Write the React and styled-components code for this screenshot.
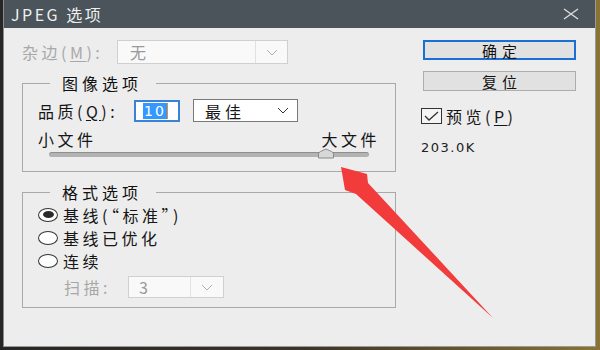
import React from 'react';
import styled, { createGlobalStyle } from 'styled-components';

const GlobalStyle = createGlobalStyle`
  html, body {
    margin: 0;
    padding: 0;
  }
  body {
    width: 600px;
    height: 350px;
    overflow: hidden;
    background: #2e2a24;
    font-family: 'Noto Sans CJK SC', 'Noto Sans', sans-serif;
  }
`;

const Screen = styled.div`
  position: relative;
  width: 600px;
  height: 350px;
  box-sizing: border-box;
  padding: 0 4px 3px 3px;
  background: linear-gradient(to right, #262626 0%, #3a3328 50%, #8a7434 100%);
`;

const Dialog = styled.div`
  width: 593px;
  height: 347px;
  box-sizing: border-box;
  display: flex;
  flex-direction: column;
  background: #ededed;
  border-left: 1px solid #8c8c8c;
  border-right: 1px solid #9a9a9a;
  border-bottom: 1px solid #9a9a9a;
`;

const TitleBar = styled.div`
  height: 28px;
  flex: none;
  display: flex;
  align-items: center;
  justify-content: space-between;
  padding: 0 16px 0 7px;
  background: #4a545a;
`;

const Title = styled.span`
  color: #eef0f0;
  font-size: 16px;
  letter-spacing: 2.5px;
  line-height: 28px;
`;

const Body = styled.div`
  display: flex;
  gap: 25px;
  padding: 12px 0 0 18px;
`;

const LeftCol = styled.div`
  width: 374px;
  display: flex;
  flex-direction: column;
`;

const RightCol = styled.div`
  width: 155px;
  display: flex;
  flex-direction: column;
`;

const Row = styled.div`
  display: flex;
  align-items: center;
  height: ${(p) => p.$h || 23}px;
  margin-top: ${(p) => p.$mt || 0}px;
  padding-left: ${(p) => p.$pl || 0}px;
`;

const Label = styled.span`
  width: ${(p) => (p.$w ? `${p.$w}px` : 'auto')};
  flex: none;
  font-size: 16px;
  letter-spacing: 3.5px;
  line-height: 18px;
  color: ${(p) => (p.$disabled ? '#a8a8a8' : '#161616')};
  white-space: nowrap;
`;

const Key = styled.span`
  text-decoration: underline;
  text-underline-offset: 2px;
`;

const SelectBox = styled.div`
  width: ${(p) => p.$w}px;
  height: ${(p) => p.$h}px;
  box-sizing: border-box;
  display: flex;
  align-items: stretch;
  flex: none;
  border: 1px solid ${(p) => (p.$disabled ? '#d0d0d0' : '#7a7a7a')};
  background: ${(p) => (p.$disabled ? '#f9f9f9' : '#ffffff')};
`;

const SelectValue = styled.span`
  flex: 1;
  display: flex;
  align-items: center;
  padding-left: ${(p) => p.$pl || 11}px;
  font-size: 16px;
  letter-spacing: 4px;
  color: ${(p) => (p.$disabled ? '#9a9a9a' : '#161616')};
`;

const SelectArrow = styled.span`
  width: ${(p) => p.$w}px;
  flex: none;
  display: flex;
  align-items: center;
  justify-content: center;
  border-left: ${(p) => (p.$split ? '1px solid #e2e2e2' : 'none')};
`;

const Group = styled.fieldset`
  margin: ${(p) => p.$mt}px 0 0 0;
  padding: ${(p) => p.$pt}px 15px ${(p) => p.$pb}px 15px;
  border: 1px solid #a9a9a9;
  min-width: 0;
`;

const Legend = styled.legend`
  margin-left: 12px;
  padding: 0 14px 0 12px;
  font-size: 16px;
  letter-spacing: 4px;
  line-height: 18px;
  color: #111;
`;

const NumberInput = styled.div`
  width: 46px;
  height: 22px;
  box-sizing: border-box;
  flex: none;
  display: flex;
  align-items: center;
  padding-left: 7px;
  margin-right: 13px;
  border: 2px solid #3a82d6;
  background: #fff;
`;

const Selected = styled.span`
  background: #3399ff;
  color: #fff;
  font-family: 'DejaVu Sans', sans-serif;
  font-size: 14px;
  letter-spacing: 2px;
  line-height: 16px;
  padding: 0 1px;
  border-right: 1px solid #e0902c;
`;

const SizeLabels = styled.div`
  display: flex;
  justify-content: space-between;
  margin-top: 9px;
  height: 16px;
  align-items: center;
`;

const Slider = styled.div`
  position: relative;
  height: 10px;
  margin: 2px 11px 0;
  display: flex;
  align-items: center;
`;

const Track = styled.div`
  flex: 1;
  height: 5px;
  border-radius: 3px;
  background: #b3b3b3;
  border-top: 1px solid #8f8f8f;
  box-sizing: border-box;
`;

const Thumb = styled.svg`
  position: absolute;
  top: -1px;
  margin-left: -10px;
`;

const RadioList = styled.div`
  display: flex;
  flex-direction: column;
`;

const RadioRow = styled.label`
  display: flex;
  align-items: center;
  gap: 5px;
  height: 23px;
`;

const RadioDot = styled.span`
  width: 20px;
  height: 14px;
  box-sizing: border-box;
  flex: none;
  border: 1px solid #333;
  border-radius: 50%;
  background: #fff;
  display: flex;
  align-items: center;
  justify-content: center;

  &::after {
    content: '';
    width: 11px;
    height: 7px;
    border-radius: 50%;
    background: ${(p) => (p.$checked ? '#2a2a2a' : 'transparent')};
  }
`;

const Button = styled.div`
  width: 153px;
  height: 20px;
  box-sizing: border-box;
  margin: ${(p) => p.$mt || 0}px 0 0 2px;
  display: flex;
  align-items: center;
  justify-content: center;
  padding-left: 5px;
  background: #e1e1e1;
  border: ${(p) => (p.$primary ? '2px solid #1a6fd4' : '1px solid #adadad')};
  font-size: 15px;
  letter-spacing: 5px;
  color: #111;
`;

const CheckRow = styled.div`
  display: flex;
  align-items: center;
  gap: 4px;
  height: 16px;
  margin-top: 17px;
`;

const CheckBox = styled.span`
  width: 21px;
  height: 16px;
  box-sizing: border-box;
  flex: none;
  border: 1px solid #333;
  background: #f4f4f4;
  display: flex;
  align-items: center;
  justify-content: center;
`;

const SizeText = styled.div`
  margin-top: 16px;
  height: 16px;
  line-height: 16px;
  font-family: 'DejaVu Sans', sans-serif;
  font-size: 13px;
  letter-spacing: 1.5px;
  color: #222;
`;

const Annotation = styled.svg`
  position: absolute;
  left: 0;
  top: 0;
  pointer-events: none;
`;

const Chevron = ({ color }) => (
  <svg width="12" height="7" viewBox="0 0 12 7">
    <polyline points="1,1 6,6 11,1" fill="none" stroke={color} strokeWidth="1" />
  </svg>
);

const Select = ({ value, w, h, arrowW, split, disabled, pl }) => (
  <SelectBox $w={w} $h={h} $disabled={disabled}>
    <SelectValue $disabled={disabled} $pl={pl}>{value}</SelectValue>
    <SelectArrow $w={arrowW} $split={split}>
      <Chevron color={disabled ? '#b0b0b0' : '#333'} />
    </SelectArrow>
  </SelectBox>
);

const Radio = ({ checked, children }) => (
  <RadioRow>
    <RadioDot $checked={checked} />
    <Label>{children}</Label>
  </RadioRow>
);

const quality = 0.87;

export default function App() {
  return (
    <>
      <GlobalStyle />
      <Screen>
        <Dialog>
          <TitleBar>
            <Title>JPEG 选项</Title>
            <svg width="16" height="12" viewBox="0 0 16 12">
              <path d="M1 1 L15 11 M15 1 L1 11" stroke="#dcdcdc" strokeWidth="1.4" />
            </svg>
          </TitleBar>
          <Body>
            <LeftCol>
              <Row $h={24}>
                <Label $w={95} $disabled>
                  杂边(<Key>M</Key>):
                </Label>
                <Select value="无" w={171} h={24} arrowW={31} split disabled pl={12} />
              </Row>

              <Group $mt={10} $pt={7} $pb={12}>
                <Legend>图像选项</Legend>
                <Row $h={23}>
                  <Label $w={96}>
                    品质(<Key>Q</Key>):
                  </Label>
                  <NumberInput>
                    <Selected>10</Selected>
                  </NumberInput>
                  <Select value="最佳" w={105} h={23} arrowW={28} pl={11} />
                </Row>
                <SizeLabels>
                  <Label>小文件</Label>
                  <Label>大文件</Label>
                </SizeLabels>
                <Slider>
                  <Track />
                  <Thumb
                    width="18"
                    height="11"
                    viewBox="0 0 18 11"
                    style={{ left: `${quality * 100}%` }}
                  >
                    <path
                      d="M1.5 10 V6 Q1.5 4.5 3.5 3.5 L9 1 L14.5 3.5 Q16.5 4.5 16.5 6 V10 Z"
                      fill="#d8d8d8"
                      stroke="#8a8a8a"
                    />
                  </Thumb>
                </Slider>
              </Group>

              <Group $mt={11} $pt={2} $pb={9}>
                <Legend>格式选项</Legend>
                <RadioList>
                  <Radio checked>基线(“标准”)</Radio>
                  <Radio>基线已优化</Radio>
                  <Radio>连续</Radio>
                </RadioList>
                <Row $h={22} $mt={4} $pl={26}>
                  <Label $w={64} $disabled>
                    扫描:
                  </Label>
                  <Select value="3" w={96} h={22} arrowW={32} split disabled pl={10} />
                </Row>
              </Group>
            </LeftCol>

            <RightCol>
              <Button $primary>确定</Button>
              <Button $mt={11}>复位</Button>
              <CheckRow>
                <CheckBox>
                  <svg width="17" height="12" viewBox="0 0 17 12">
                    <polyline points="2,6 6,10 15,2" fill="none" stroke="#333" strokeWidth="1.3" />
                  </svg>
                </CheckBox>
                <Label>
                  预览(<Key>P</Key>)
                </Label>
              </CheckRow>
              <SizeText>203.0K</SizeText>
            </RightCol>
          </Body>
        </Dialog>

        <Annotation width="600" height="350" viewBox="0 0 600 350">
          <polygon
            points="341,167 367,174 368,183 493,318 356,194 345,190"
            fill="#f23b3b"
          />
        </Annotation>
      </Screen>
    </>
  );
}
